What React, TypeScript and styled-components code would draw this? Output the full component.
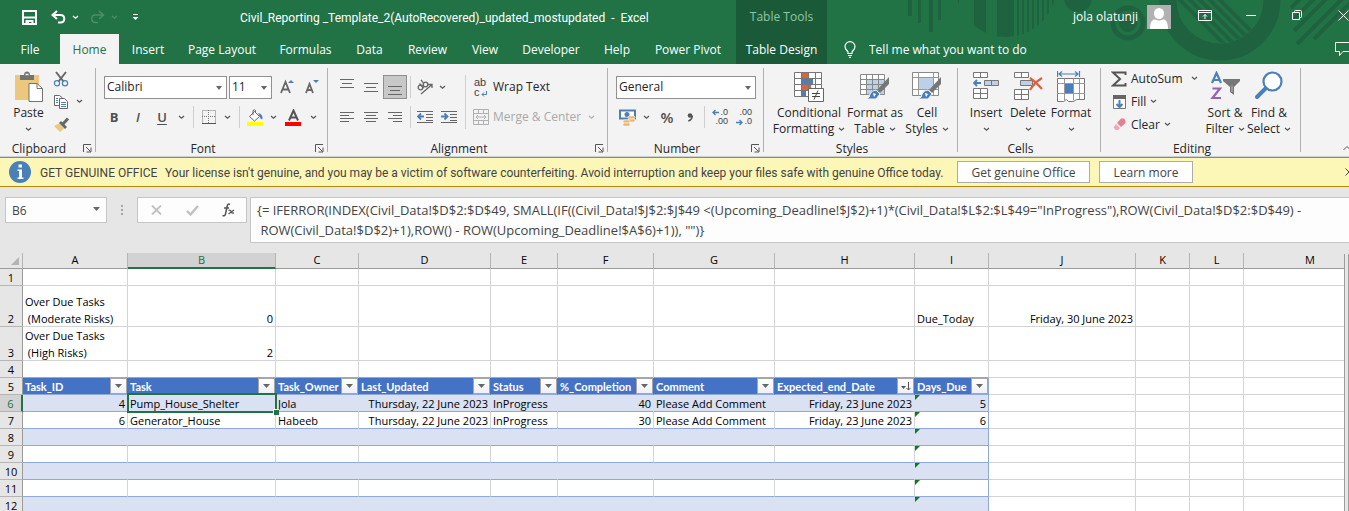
import React from 'react';
import styled, { createGlobalStyle, css } from 'styled-components';

const GREEN = '#217346';
const DARK = '#1b5a38';
const BLUE = '#4a7fb8';
const INK = '#666666';
const UI_FONT = '"Open Sans", "Noto Sans", sans-serif';
const LONG_FONT = 'Roboto, "Open Sans", sans-serif';
const GLYPH_FONT = '"Liberation Sans", Arial, sans-serif';

const GlobalStyle = createGlobalStyle`
  *, *::before, *::after { box-sizing: border-box; }
  html, body { margin: 0; height: 100%; overflow: hidden; }
  button, input, select, textarea { font: inherit; color: inherit; margin: 0; padding: 0; border: 0; background: none; }
  svg { display: block; flex: none; }
`;

const Window = styled.div`
  display: flex;
  flex-direction: column;
  height: 100vh;
  overflow: hidden;
  background: #e6e6e6;
  color: #262626;
  font-family: ${UI_FONT};
  font-size: 12px;
  line-height: 16px;
  white-space: nowrap;
`;

/* ---------- header ---------- */

const Header = styled.header`
  position: relative;
  flex: none;
  display: grid;
  grid-template-columns: 736px 91px minmax(0, 1fr);
  height: 64px;
  overflow: hidden;
  background: ${GREEN};
  color: #fff;
`;

const HeaderArt = styled.svg`
  position: absolute;
  top: 0;
  right: 0;
`;

const HeaderBlock = styled.div<{ $dark?: boolean }>`
  position: relative;
  display: grid;
  grid-template-rows: 34px 30px;
  background: ${(p) => (p.$dark ? DARK : 'transparent')};
`;

const TitleRow = styled.div`
  display: flex;
  align-items: center;
  min-width: 0;
`;

const QuickAccess = styled.div`
  display: flex;
  align-items: center;
  width: 240px;
  padding-left: 17px;
`;

const DocumentTitle = styled.span`
  padding-top: 2px;
  font-family: ${LONG_FONT};
`;

const ContextLabel = styled.div`
  align-self: center;
  text-align: center;
  color: #8fc7a4;
`;

const TabRow = styled.nav`
  display: flex;
`;

const Tab = styled.button<{ $w: number; $active?: boolean }>`
  width: ${(p) => p.$w}px;
  height: 30px;
  padding-top: 1px;
  text-align: center;
  ${(p) => p.$active && css`background: #f3f3f3; color: ${GREEN};`}
`;

const Account = styled.div`
  display: flex;
  align-items: center;
  gap: 9px;
  margin-left: auto;
  margin-right: 11px;
`;

const WindowButtons = styled.div`
  display: flex;
  flex: none;
  height: 30px;
  align-self: flex-start;
  margin-right: -17px;
`;

const TellMe = styled.label`
  display: flex;
  align-items: center;
  gap: 13px;
  padding-left: 17px;
  flex: 1;
`;

const TellInput = styled.input`
  flex: 1;
  padding-top: 1px;
  outline: none;
  &::placeholder { color: #fff; opacity: 1; }
`;

const CommentsButton = styled.button`
  margin-right: -5px;
`;

/* ---------- ribbon ---------- */

const Ribbon = styled.section`
  flex: none;
  display: flex;
  height: 93px;
  background: #f3f3f3;
  border-bottom: 1px solid #cfcfd6;
`;

const GroupBox = styled.div<{ $w: number }>`
  display: grid;
  grid-template-rows: 76px 16px;
  width: ${(p) => p.$w}px;
  flex: none;
  background: linear-gradient(#b1b1b1, #b1b1b1) right 4px / 1px 84px no-repeat;
`;

const GroupBody = styled.div<{ $pad: number; $top?: number }>`
  display: flex;
  padding: ${(p) => p.$top ?? 0}px 0 0 ${(p) => p.$pad}px;
`;

const GroupFooter = styled.div`
  position: relative;
  text-align: center;
  padding: 1px 18px 0 0;
`;

const Launcher = styled.button`
  position: absolute;
  right: 4px;
  top: 4px;
`;

const Stack = styled.div<{ $gap?: number; $w?: number }>`
  display: flex;
  flex-direction: column;
  flex: none;
  gap: ${(p) => p.$gap ?? 0}px;
  width: ${(p) => (p.$w ? `${p.$w}px` : 'auto')};
`;

const ToolRow = styled.div<{ $h?: number }>`
  display: flex;
  align-items: center;
  height: ${(p) => p.$h ?? 24}px;
`;

const Tool = styled.button<{ $w?: number; $h?: number; $on?: boolean }>`
  display: flex;
  align-items: center;
  justify-content: center;
  flex: none;
  width: ${(p) => p.$w ?? 24}px;
  height: ${(p) => p.$h ?? 24}px;
  ${(p) => p.$on && css`background: #c8c8c8; border: 1px solid #8f8f8f;`}
`;

const TextTool = styled.button<{ $muted?: boolean }>`
  display: flex;
  align-items: center;
  gap: 4px;
  height: 100%;
  color: ${(p) => (p.$muted ? '#a9a9a9' : 'inherit')};
`;

const IconSlot = styled.span`
  display: flex;
  justify-content: center;
  width: 16px;
`;

const Rule = styled.span<{ $h?: number; $l?: number; $r?: number }>`
  flex: none;
  width: 1px;
  height: ${(p) => p.$h ?? 22}px;
  margin: 0 ${(p) => p.$r ?? 4}px 0 ${(p) => p.$l ?? 5}px;
  background: #cfcfcf;
`;

const BigTool = styled.button<{ $w: number }>`
  display: flex;
  flex-direction: column;
  align-items: center;
  flex: none;
  width: ${(p) => p.$w}px;
  height: 76px;
  padding-top: 7px;
`;

const BigIcon = styled.span`
  display: flex;
  align-items: flex-start;
  height: 34px;
`;

const BigLine = styled.span`
  display: flex;
  align-items: center;
  justify-content: center;
  gap: 4px;
  height: 16px;
`;

const SelectBox = styled.span<{ $w: number }>`
  position: relative;
  display: block;
  flex: none;
  width: ${(p) => p.$w}px;
  height: 23px;
  background: #fff;
  border: 1px solid #919191;
`;

const Select = styled.select`
  appearance: none;
  width: 100%;
  height: 21px;
  padding-left: 2px;
  outline: none;
`;

const CaretMark = styled.span<{ $r?: number }>`
  position: absolute;
  right: ${(p) => p.$r ?? 4}px;
  top: 9px;
  pointer-events: none;
`;

const Letter = styled.span<{ $b?: boolean; $i?: boolean; $u?: boolean; $size?: number }>`
  color: #4f4f4f;
  font-size: ${(p) => p.$size ?? 13}px;
  font-weight: ${(p) => (p.$b ? 700 : 600)};
  font-style: ${(p) => (p.$i ? 'italic' : 'normal')};
  text-decoration: ${(p) => (p.$u ? 'underline' : 'none')};
  text-underline-offset: 2px;
`;

const RibbonEnd = styled.div`
  display: flex;
  flex: 1;
  justify-content: flex-end;
  align-items: flex-end;
  padding-bottom: 5px;
  overflow: hidden;
`;

const EdgeButton = styled.button`
  margin-right: -2px;
`;

/* ---------- message bar ---------- */

const MessageBar = styled.section`
  flex: none;
  display: flex;
  align-items: center;
  height: 30px;
  padding-left: 9px;
  overflow: hidden;
  background: #fcf7b6;
  border-top: 1px solid #b18b10;
  border-bottom: 1px solid #b18b10;
  color: #444;
`;

const MessageTitle = styled.span`
  width: 125px;
  margin-left: 9px;
  padding-top: 2px;
  font-family: ${LONG_FONT};
`;

const MessageText = styled.span`
  width: 792px;
  padding-top: 2px;
  font-family: ${LONG_FONT};
`;

const MessageButton = styled.button<{ $w: number }>`
  width: ${(p) => p.$w}px;
  height: 22px;
  padding-top: 1px;
  margin-right: 9px;
  background: #fff;
  border: 1px solid #ababab;
`;

const MessageClose = styled.button`
  margin-left: auto;
  margin-right: -4px;
`;

/* ---------- formula bar ---------- */

const FormulaBar = styled.section`
  flex: none;
  display: flex;
  align-items: flex-start;
  height: 66px;
  padding: 10px 0 0 5px;
`;

const NameBox = styled.label`
  position: relative;
  width: 102px;
  height: 26px;
  background: #fdfdfd;
  border: 1px solid #c6c6c6;
`;

const NameInput = styled.input`
  width: 70px;
  height: 24px;
  padding-left: 6px;
  color: #444;
  outline: none;
`;

const Dots = styled.span`
  display: flex;
  justify-content: center;
  width: 30px;
  padding-top: 8px;
`;

const FormulaTools = styled.div`
  display: flex;
  width: 110px;
  height: 26px;
  margin-right: 3px;
  background: #fdfdfd;
  border: 1px solid #c6c6c6;
`;

const FormulaInput = styled.textarea`
  flex: 1;
  height: 46px;
  padding: 2px 6px;
  background: #fdfdfd;
  border: 1px solid #c6c6c6;
  border-right: 0;
  color: #444;
  font-size: 13px;
  line-height: 20px;
  white-space: pre;
  overflow: hidden;
  resize: none;
  outline: none;
`;

/* ---------- sheet ---------- */

const SheetArea = styled.main`
  display: flex;
  flex: 1;
  min-height: 0;
`;

const SheetView = styled.div`
  flex: 1;
  min-width: 0;
  overflow: hidden;
  background: #fff;
`;

const ScrollEdge = styled.div`
  flex: none;
  width: 5px;
  margin-top: 1px;
  background: #e6e6e6;
  border-left: 1px solid #9b9b9b;
  border-right: 1px solid #9b9b9b;
`;

const Sheet = styled.table`
  table-layout: fixed;
  width: 1377px;
  border-collapse: separate;
  border-spacing: 0;
  font-size: 11px;
  line-height: 14px;
  color: #000;
`;

const ColHead = styled.th<{ $sel?: boolean }>`
  height: 16px;
  padding: 0;
  font-weight: 400;
  vertical-align: top;
  border-right: 1px solid #b5b5b5;
  border-bottom: 1px solid #9b9b9b;
  background: ${(p) => (p.$sel ? '#d2d2d2' : '#e6e6e6')};
  ${(p) => p.$sel && css`color: ${GREEN}; border-bottom: 2px solid ${GREEN};`}
`;

const Corner = styled(ColHead)`
  vertical-align: bottom;
  & > svg { margin: 0 0 3px 11px; }
`;

const RowHead = styled.th<{ $h: number; $sel?: boolean }>`
  height: ${(p) => p.$h}px;
  padding: 2px 0 0;
  font-weight: 400;
  vertical-align: bottom;
  border-right: 1px solid #9b9b9b;
  border-bottom: 1px solid #b5b5b5;
  background: ${(p) => (p.$sel ? '#d2d2d2' : '#e6e6e6')};
  ${(p) => p.$sel && css`color: ${GREEN}; border-right: 2px solid ${GREEN};`}
`;

type Kind = 'plain' | 'band' | 'row' | 'head';

const Cell = styled.td<{ $kind: Kind; $right?: boolean; $last?: boolean; $topRule?: boolean }>`
  position: relative;
  padding: 2px 2px 0;
  vertical-align: bottom;
  text-align: ${(p) => (p.$right ? 'right' : 'left')};
  border-right: 1px solid ${(p) => (p.$last ? '#8ea9db' : p.$kind === 'band' ? '#d9e1f2' : p.$kind === 'head' ? '#4472c4' : '#d4d4d4')};
  border-bottom: 1px solid ${(p) => (p.$kind === 'plain' && !p.$topRule ? '#d4d4d4' : '#8ea9db')};
  background: ${(p) => (p.$kind === 'band' ? '#d9e1f2' : p.$kind === 'head' ? '#4472c4' : '#fff')};
  ${(p) => p.$kind === 'head' && css`color: #fff; font-family: Lato, sans-serif; font-weight: 700;`}
`;

const Lines = styled.span`
  display: grid;
  gap: 3px;
  white-space: pre;
`;

const FilterButton = styled.button`
  position: absolute;
  top: 0;
  right: 0;
  display: flex;
  align-items: center;
  justify-content: center;
  width: 17px;
  height: 16px;
  background: linear-gradient(#fff, #eef0f5);
  border: 1px solid #a6a6a6;
`;

const Selection = styled.span`
  position: absolute;
  inset: -2px -2px -2px -1px;
  z-index: 1;
  border: 2px solid ${GREEN};
  &::after {
    content: '';
    position: absolute;
    right: -4px;
    bottom: -4px;
    width: 6px;
    height: 6px;
    background: ${GREEN};
    border-top: 1px solid #fff;
    border-left: 1px solid #fff;
  }
`;

const ErrorMark = styled.span`
  position: absolute;
  top: 0;
  left: 0;
  border-top: 5px solid #0a7d12;
  border-right: 5px solid transparent;
`;

/* ---------- icons ---------- */

const Chev = ({ c = '#555' }: { c?: string }) => (
  <svg width="7" height="5" viewBox="0 0 7 5"><path d="M1 1l2.5 2.3L6 1" fill="none" stroke={c} strokeWidth="1.2" /></svg>
);
const Caret = ({ w = 7 }: { w?: number }) => (
  <svg width={w} height="4" viewBox="0 0 8 4" preserveAspectRatio="none"><path d="M0 0h8L4 4z" fill="#666" /></svg>
);
const LaunchIcon = () => (
  <svg width="9" height="9" viewBox="0 0 9 9"><path d="M.5 8V.5H8M3 3l4.5 4.5M8 3.5V8H3.5" fill="none" stroke="#555" /></svg>
);
const SaveIcon = () => (
  <svg width="15" height="15" viewBox="0 0 15 15"><path d="M1 1h13v13H1z" fill="none" stroke="#fff" strokeWidth="2" /><path d="M2 6.500h11V8.500H2zM3.500 10h8v4h-2v-2H7V14H3.500z" fill="#fff" /></svg>
);
const UndoIcon = ({ flip }: { flip?: boolean }) => (
  <svg width="15" height="14" viewBox="0 0 15 14">
    <g transform={flip ? 'matrix(-1 0 0 1 15 0)' : undefined} fill="none" stroke={flip ? '#4c8f6b' : '#fff'} strokeWidth={flip ? 1.4 : 2}>
      <path d="M6 1L1.500 5 6 9M2 5h7.500c5 0 5 7.500 0 7.500H7" />
    </g>
  </svg>
);
const CustomizeIcon = () => (
  <svg width="7" height="7" viewBox="0 0 7 7"><path d="M1 .5h5" stroke="#fff" /><path d="M.5 3h6l-3 3z" fill="#fff" /></svg>
);
const Avatar = () => (
  <svg width="24" height="24" viewBox="0 0 24 24"><path d="M0 0h24v24H0z" fill="#b1b1b1" /><ellipse cx="12" cy="8.500" rx="5" ry="5.500" fill="#fff" /><path d="M3 24c0-7 2-9.500 5-9.500q4 2 8 0c3 0 5 2.500 5 9.500z" fill="#fff" /></svg>
);
const BulbIcon = () => (
  <svg width="12" height="17" viewBox="0 0 12 17"><path d="M4 12.500V11C3 9 1 8.500 1 5.500a5 4.800 0 0 1 10 0C11 8.500 9 9 8 11v1.500zM4 14.500h4M5 16.300h2" fill="none" stroke="#fff" strokeWidth="1.200" /></svg>
);

const HeaderPattern = () => (
  <HeaderArt width="449" height="64" viewBox="0 0 449 64" aria-hidden="true">
    <defs>
      <clipPath id="disc"><circle cx="106" cy="-13" r="50" /></clipPath>
      <clipPath id="ringInner"><circle cx="320" cy="0" r="43" /></clipPath>
    </defs>
    <g fill="#1f623f">
      <path d="M8 0h4v16H8zM18 0h3v23h-3zM29 0h4v32h-4zM38 0h3v20h-3z" />
      <g clipPath="url(#disc)"><path d="M55 0h4v40h-4zM74 0h12v40H74zM97 0h17v40H97zM117 0h2v40h-2zM122 0h2v40h-2zM127 0h2v40h-2zM132 0h2v40h-2zM137 0h2v40h-2zM142 0h2v40h-2zM147 0h2v40h-2zM152 0h2v40h-2z" /></g>
      <circle cx="178" cy="-2" r="14" />
      <circle cx="228" cy="23" r="9" />
    </g>
    <g fill="none" stroke="#1f623f">
      <circle cx="228" cy="23" r="15" strokeWidth="5" />
      <circle cx="320" cy="0" r="52" strokeWidth="17" />
      <g clipPath="url(#ringInner)" strokeWidth="4"><path d="M270-10l60 60M280-10l60 60M290-10l60 60M300-10l60 60M310-10l60 60" /></g>
      <path d="M391 8l10-10M394 19l24-24M394 31l40-40M397 44l52-52M414 39l42-42" strokeWidth="4" />
    </g>
  </HeaderArt>
);

const PasteIcon = () => (
  <svg width="30" height="32" viewBox="0 0 30 32">
    <path d="M1 4h24v25H1z" fill="#ecc77e" /><path d="M6 4h4q0-3.500 3-3.500T16 4h4v5H6z" fill="#737373" /><path d="M11.500 3.500h3" stroke="#f3f3f3" strokeWidth="1.500" />
    <path d="M15 12.500h8l5.500 5V30.500H15z" fill="#fff" stroke="#737373" /><path d="M23 12.500v5h5.500" fill="none" stroke="#737373" />
  </svg>
);
const CutIcon = () => (
  <svg width="16" height="16" viewBox="0 0 16 16"><path d="M3 1l7.500 9.500M13 1L5.500 10.500" stroke="#666" strokeWidth="2" /><g fill="none" stroke={BLUE} strokeWidth="1.200"><circle cx="4" cy="12.300" r="2.600" /><circle cx="12" cy="12.300" r="2.600" /></g></svg>
);
const CopyIcon = () => (
  <svg width="16" height="16" viewBox="0 0 16 16"><g fill="#fff" stroke="#666"><path d="M1.500 1.500h5l2.500 2v8H1.500z" /><path d="M6.500 4.500h5l3 3v7h-8z" /></g><path d="M3 4.500h2M3 6.500h2M3 8.500h2M8 8.500h5M8 10.500h5M8 12.500h5" stroke={BLUE} /></svg>
);
const PainterIcon = () => (
  <svg width="17" height="16" viewBox="0 0 17 16"><path d="M1 9l5-2.500 5 5L7 15z" fill="#ecc77e" /><path d="M6 6l2-2 6 6-2 2z" fill="#666" /><path d="M10 7l5-5.500" stroke="#666" strokeWidth="3" /></svg>
);
const SizeIcon = ({ down }: { down?: boolean }) => (
  <svg width="16" height="16" viewBox="0 0 16 16"><path d={down ? 'M2 14L5.500 5 9 14M3.300 11h4.500' : 'M1 14L5.500 3 10 14M2.700 10.500h5.700'} fill="none" stroke="#666" strokeWidth="1.800" /><path d={down ? 'M9 1h6l-3 3z' : 'M8 4h6l-3-3z'} fill={BLUE} /></svg>
);
const BordersIcon = () => (
  <svg width="14" height="14" viewBox="0 0 14 14"><path d="M.5.5h13v13H.5zM6.500 0v14M0 6.500h14" fill="none" stroke="#777" strokeDasharray="1 1" /><path d="M0 13.500h14" stroke="#555" /></svg>
);
const FillColorIcon = () => (
  <svg width="17" height="17" viewBox="0 0 17 17"><path d="M2.500 7.500l5-5 5 5-5 4.500z" fill="#fff" stroke="#666" /><path d="M6 6V1.500q1.500-1.500 2.500 0V4" fill="none" stroke="#666" /><path d="M11 4q5 1 4.500 6-2 1-2.500-2z" fill={BLUE} /><path d="M0 13h16v4H0z" fill="#ff0" /></svg>
);
const FontColorIcon = () => (
  <svg width="17" height="17" viewBox="0 0 17 17"><path d="M4 11.500L8.500 1.500 13 11.500M5.500 8.500h6" fill="none" stroke="#555" strokeWidth="2" /><path d="M0 13h16v4H0z" fill="red" /></svg>
);
const LinesIcon = ({ d, c = INK }: { d: string; c?: string }) => (
  <svg width="16" height="16" viewBox="0 0 16 16"><path d={d} stroke={c} fill="none" /></svg>
);
const OrientIcon = () => (
  <svg width="18" height="16" viewBox="0 0 18 16"><g fill="none" stroke="#666" strokeWidth="1.300"><circle cx="4.500" cy="8.500" r="2.300" /><path d="M3.500 4.500l4 4.500" /><circle cx="9.500" cy="5.500" r="2.300" /><path d="M5 .8l3 4M5 15L15.500 6M12 5.500h4V9" /></g></svg>
);
const IndentIcon = ({ right }: { right?: boolean }) => (
  <svg width="16" height="14" viewBox="0 0 16 14"><path d="M0 1.500h16M9 4.500h7M9 7.500h7M9 10.500h7M0 12.500h16" stroke={INK} /><path d={right ? 'M0 6.500h6M3.500 3.500l3 3-3 3' : 'M1 6.500h6M4 3.500l-3 3 3 3'} fill="none" stroke={BLUE} strokeWidth="1.800" /></svg>
);
const WrapGlyph = styled.span`
  position: relative;
  display: block;
  width: 14px;
  font-family: ${GLYPH_FONT};
  font-size: 11px;
  line-height: 10px;
  color: #444;
  text-align: left;
  & > svg { position: absolute; right: 1px; bottom: 0; }
`;
const MergeIcon = () => (
  <svg width="16" height="16" viewBox="0 0 16 16"><path d="M.5.5h15v15H.5zM.5 4.500h15M.5 11.500h15M5.500.5v4M10.500.5v4M5.500 11.500v4M10.500 11.500v4M3 8h10M5 6L3 8l2 2M11 6l2 2-2 2" fill="none" stroke="#b0b0b0" /></svg>
);
const MoneyIcon = () => (
  <svg width="17" height="17" viewBox="0 0 17 17"><path d="M1 1.500h15v8H1z" fill="#fff" stroke={BLUE} strokeWidth="2" /><circle cx="8" cy="5.500" r="2.500" fill={BLUE} /><g fill="#ecb565" stroke="#f3f3f3" strokeWidth=".7"><rect x="9" y="7" width="7" height="3" rx="1.500" /><rect x="9" y="10" width="7" height="3" rx="1.500" /><rect x="4" y="11" width="7" height="3" rx="1.500" /><rect x="4" y="14" width="7" height="3" rx="1.500" /></g></svg>
);
const DecimalGlyph = styled.span<{ $right?: boolean }>`
  position: relative;
  display: block;
  width: 16px;
  font-family: ${GLYPH_FONT};
  font-size: 9px;
  line-height: 9px;
  text-align: right;
  color: #444;
  & > svg { position: absolute; left: 0; ${(p) => (p.$right ? 'bottom: 0;' : 'top: 1px;')} }
`;
const MiniArrow = ({ right }: { right?: boolean }) => (
  <svg width="7" height="7" viewBox="0 0 7 7"><path d={right ? 'M0 3.500h6M3.500 1L6 3.500 3.500 6' : 'M1 3.500h6M3.500 1L1 3.500 3.500 6'} fill="none" stroke={BLUE} strokeWidth="1.300" /></svg>
);
const CondIcon = () => (
  <svg width="30" height="31" viewBox="0 0 30 31">
    <path d="M1 1.500h27v24H1z" fill="#fff" /><path d="M8 2h6v5H8zM8 14h9v5H8z" fill="#dc6141" /><path d="M8 8h11v5H8zM8 20h4v5H8z" fill={BLUE} />
    <path d="M.5 1.500h27v24H.5zM.5 7.500h27M.5 13.500h27M.5 19.500h27M7.500 1.500v24M14.500 1.500v24M21.500 1.500v24" fill="none" stroke="#777" />
    <path d="M14.500 17.500h15v13h-15z" fill="#fff" stroke="#666" /><path d="M18 22.500h8M18 25.500h8M24 19.500l-4 9" stroke="#444" />
  </svg>
);
const Brush = () => (
  <g><path d="M29 6v7l-9 9-3-3z" fill="#777" /><path d="M16 19l4 4-4 5H6q4-1 4-5 2-4 6-4z" fill={BLUE} stroke="#f3f3f3" /><path d="M13 22l3 1-2 3" fill="#fff" /></g>
);
const FormatTableIcon = () => (
  <svg width="30" height="31" viewBox="0 0 30 31"><path d="M.5 3.500h24v20H.5z" fill="#fff" /><path d="M7 9h18v14H7z" fill="#bcd0e8" /><path d="M.5 3.500h24v20H.5zM.5 8.500h24M.5 13.500h24M.5 18.500h24M6.500 3.500v20M12.500 3.500v20M18.500 3.500v20" fill="none" stroke="#888" /><Brush /></svg>
);
const CellStyleIcon = () => (
  <svg width="30" height="31" viewBox="0 0 30 31"><path d="M.5 1.500h26v23H.5z" fill="#fff" stroke="#888" /><path d="M.5 6.500h26M.5 18.500h26M6.500 1.500v23M21.500 1.500v23" stroke="#999" /><path d="M7 7h14v11H7z" fill="#bcd0e8" /><Brush /></svg>
);
const InsertCellIcon = () => (
  <svg width="28" height="30" viewBox="0 0 28 30"><g fill="#fff" stroke="#777"><path d="M1.500 1.500h14v5h-14zM8.500 1.500v5M1.500 17.500h14v10h-14zM8.500 17.500v10M1.500 22.500h14" /><path d="M12.500 9.500h14v5h-14zM19.500 9.500v5" fill="#bcd0e8" /></g><path d="M2 12h7M5 9l-3 3 3 3" fill="none" stroke={BLUE} strokeWidth="1.800" /></svg>
);
const DeleteCellIcon = () => (
  <svg width="31" height="30" viewBox="0 0 31 30"><g fill="#fff" stroke="#777"><path d="M1.500 1.500h14v5h-14zM8.500 1.500v5M1.500 18.500h14v10h-14zM8.500 18.500v10M1.500 23.500h14" /><path d="M7.500 9.500h12v5h-12z" fill="#bcd0e8" /></g><path d="M17 7q6 4 12 11M29 7Q21 12 17 19" fill="none" stroke="#dc6141" strokeWidth="2.200" /></svg>
);
const FormatCellIcon = () => (
  <svg width="28" height="32" viewBox="0 0 28 32"><path d="M.5 0v6M22.500 0v6M2 3h19M5 .5L2 3l3 2.500M18 .5L21 3l-3 2.500" fill="none" stroke={BLUE} strokeWidth="1.200" /><path d="M.5 7.500h27v21h-8l-3 2h-5l-2-2-3 2h-6z" fill="#fff" stroke="#777" /><path d="M0 12.500h28M0 22.500h28M7.500 7.500v22M16.500 7.500v22M22.500 7.500v21" stroke="#999" /><path d="M8 13h8v9H8z" fill={BLUE} /></svg>
);
const SumIcon = () => (
  <svg width="16" height="16" viewBox="0 0 16 16"><path d="M14.500 4V1.500H2L9 8l-7 6.500h12.500V12" fill="none" stroke="#555" strokeWidth="2" /></svg>
);
const FillDownIcon = () => (
  <svg width="15" height="16" viewBox="0 0 15 16"><path d="M1.500 1.500h12v13h-12z" fill="#fff" stroke="#777" /><path d="M1 1h13v4H1z" fill="#666" /><path d="M7.500 6v7M4.500 10l3 3 3-3" fill="none" stroke={BLUE} strokeWidth="2" /></svg>
);
const EraserIcon = () => (
  <svg width="15" height="15" viewBox="0 0 15 15"><path d="M9 1.500h3l1.500 2.500v2L9 10 5 6z" fill="#e77f93" /><path d="M4 7l4 4-2 2H3.500L1.500 10.500z" fill="#f0a6b3" /></svg>
);
const SortIcon = () => (
  <svg width="30" height="30" viewBox="0 0 30 30"><path d="M2 12L6.500 2 11 12M3.500 9h6" fill="none" stroke={BLUE} strokeWidth="2.200" /><path d="M2.500 17.500h7.500l-7.500 9.500H11" fill="none" stroke="#9a60b8" strokeWidth="2.200" /><path d="M13 8h17v2l-6 6v8l-4-3v-5l-7-6z" fill="#777" /><path d="M22 14.500v6.500" stroke="#bbb" /></svg>
);
const FindIcon = () => (
  <svg width="30" height="30" viewBox="0 0 30 30"><circle cx="18.500" cy="10.500" r="9" fill="#fff" stroke={BLUE} strokeWidth="2.200" /><path d="M11.500 17.500L3 26" stroke={BLUE} strokeWidth="4" strokeLinecap="round" /></svg>
);
const InfoIcon = () => (
  <svg width="22" height="22" viewBox="0 0 22 22"><circle cx="11" cy="11" r="11" fill={BLUE} /><path d="M9.500 3.500h3.500v3H9.500zM8.500 8.500H13v8h1.500V18h-6v-1.500H10V10H8.500z" fill="#fff" /></svg>
);

/* ---------- data ---------- */

const TABS: [string, number][] = [
  ['File', 60], ['Home', 59], ['Insert', 58], ['Page Layout', 90], ['Formulas', 77], ['Data', 51],
  ['Review', 65], ['View', 50], ['Developer', 82], ['Help', 50], ['Power Pivot', 92],
];

const COLS: [string, number][] = [
  ['A', 105], ['B', 148], ['C', 83], ['D', 132], ['E', 67], ['F', 96], ['G', 121],
  ['H', 140], ['I', 74], ['J', 147], ['K', 54], ['L', 54], ['M', 133],
];

const FIELDS = ['Task_ID', 'Task', 'Task_Owner', 'Last_Updated', 'Status', '%_Completion', 'Comment', 'Expected_end_Date', 'Days_Due'];
const RIGHT_FIELDS = [0, 3, 5, 7, 8];

const RECORDS: Record<number, string[]> = {
  6: ['4', 'Pump_House_Shelter', 'Jola', 'Thursday, 22 June 2023', 'InProgress', '40', 'Please Add Comment', 'Friday, 23 June 2023', '5'],
  7: ['6', 'Generator_House', 'Habeeb', 'Thursday, 22 June 2023', 'InProgress', '30', 'Please Add Comment', 'Friday, 23 June 2023', '6'],
};

const NOTES: Record<string, { lines: string[]; right?: boolean }> = {
  '2-0': { lines: ['Over Due Tasks', ' (Moderate Risks)'] },
  '2-1': { lines: ['0'], right: true },
  '2-8': { lines: ['Due_Today'] },
  '2-9': { lines: ['Friday, 30 June 2023'], right: true },
  '3-0': { lines: ['Over Due Tasks', ' (High Risks)'] },
  '3-1': { lines: ['2'], right: true },
};

const ROWS = Array.from({ length: 12 }, (_, i) => i + 1);
const rowHeight = (n: number) => (n === 2 ? 41 : n === 3 ? 34 : 17);

const FORMULA =
  '{= IFERROR(INDEX(Civil_Data!$D$2:$D$49, SMALL(IF((Civil_Data!$J$2:$J$49 <(Upcoming_Deadline!$J$2)+1)*(Civil_Data!$L$2:$L$49="InProgress"),ROW(Civil_Data!$D$2:$D$49) -\n' +
  ' ROW(Civil_Data!$D$2)+1),ROW() - ROW(Upcoming_Deadline!$A$6)+1)), "")}';

/* ---------- composed parts ---------- */

const Group = ({ label, w, pad, top, launcher, children }: {
  label: string; w: number; pad: number; top?: number; launcher?: boolean; children: React.ReactNode;
}) => (
  <GroupBox $w={w}>
    <GroupBody $pad={pad} $top={top}>{children}</GroupBody>
    <GroupFooter>
      {label}
      {launcher && <Launcher aria-label={`${label} settings`}><LaunchIcon /></Launcher>}
    </GroupFooter>
  </GroupBox>
);

const Drop = ({ w = 14, c, label }: { w?: number; c?: string; label: string }) => (
  <Tool $w={w} aria-label={label}><Chev c={c} /></Tool>
);

const Combo = ({ label, value, w }: { label: string; value: string; w: number }) => (
  <SelectBox $w={w}>
    <Select aria-label={label} defaultValue={value}><option>{value}</option></Select>
    <CaretMark><Caret w={6} /></CaretMark>
  </SelectBox>
);

const Big = ({ w, icon, l1, l2 }: { w: number; icon: React.ReactNode; l1: string; l2?: string }) => (
  <BigTool $w={w}>
    <BigIcon>{icon}</BigIcon>
    <BigLine>{l1}</BigLine>
    <BigLine>{l2}<Chev /></BigLine>
  </BigTool>
);

const SheetCell = ({ row, col }: { row: number; col: number }) => {
  const inTable = col < 9;
  if (inTable && row === 5) {
    return (
      <Cell $kind="head" $last={col === 8}>
        {FIELDS[col]}
        <FilterButton aria-label={`Filter ${FIELDS[col]}`}>
          {col === 7
            ? <svg width="10" height="9" viewBox="0 0 10 9"><path d="M0 4h5L2.500 7z" fill="#555" /><path d="M7.500 0v8M5.500 6l2 2 2-2" fill="none" stroke="#555" /></svg>
            : <Caret w={7} />}
        </FilterButton>
      </Cell>
    );
  }
  if (inTable && row > 5) {
    return (
      <Cell $kind={row % 2 === 0 ? 'band' : 'row'} $right={RIGHT_FIELDS.includes(col)} $last={col === 8}>
        {RECORDS[row]?.[col]}
        {col === 8 && <ErrorMark />}
        {row === 6 && col === 1 && <Selection />}
      </Cell>
    );
  }
  const note = NOTES[`${row}-${col}`];
  return (
    <Cell $kind="plain" $right={note?.right} $topRule={inTable && row === 4}>
      {note && <Lines>{note.lines.map((t) => <span key={t}>{t}</span>)}</Lines>}
    </Cell>
  );
};

export default function App() {
  return (
    <Window>
      <GlobalStyle />
      <Header>
        <HeaderPattern />
        <HeaderBlock>
          <TitleRow>
            <QuickAccess>
              <Tool aria-label="Save"><SaveIcon /></Tool>
              <Rule $h={0} $l={2} $r={2} />
              <Tool aria-label="Undo"><UndoIcon /></Tool>
              <Drop w={10} c="#fff" label="Undo history" />
              <Rule $h={0} $l={2} $r={2} />
              <Tool aria-label="Redo"><UndoIcon flip /></Tool>
              <Drop w={10} c="#4c8f6b" label="Redo history" />
              <Tool $w={32} aria-label="Customize toolbar"><CustomizeIcon /></Tool>
            </QuickAccess>
            <DocumentTitle>Civil_Reporting _Template_2(AutoRecovered)_updated_mostupdated&nbsp; -&nbsp; Excel</DocumentTitle>
          </TitleRow>
          <TabRow>
            {TABS.map(([t, w]) => <Tab key={t} $w={w} $active={t === 'Home'}>{t}</Tab>)}
          </TabRow>
        </HeaderBlock>
        <HeaderBlock $dark>
          <ContextLabel>Table Tools</ContextLabel>
          <Tab $w={91}>Table Design</Tab>
        </HeaderBlock>
        <HeaderBlock>
          <TitleRow>
            <Account>jola olatunji<Avatar /></Account>
            <WindowButtons>
              <Tool $w={46} $h={30} aria-label="Ribbon display options">
                <svg width="14" height="11" viewBox="0 0 14 11"><path d="M.5.5h13v10H.5zM.5 2.500h13M7 9V4.500M5 6.500l2-2 2 2" fill="none" stroke="#fff" /></svg>
              </Tool>
              <Tool $w={46} $h={30} aria-label="Minimize"><svg width="10" height="1"><path d="M0 0h10v1H0z" fill="#fff" /></svg></Tool>
              <Tool $w={46} $h={30} aria-label="Restore">
                <svg width="10" height="10" viewBox="0 0 10 10"><path d="M.5 2.500h7v7h-7zM2.500 2.500V1.500q0-1 1-1h5q1 0 1 1v5q0 1-1 1h-1" fill="none" stroke="#fff" /></svg>
              </Tool>
              <Tool $w={46} $h={30} aria-label="Close"><svg width="11" height="11" viewBox="0 0 11 11"><path d="M.5.5l10 10M10.500.5l-10 10" stroke="#fff" /></svg></Tool>
            </WindowButtons>
          </TitleRow>
          <TitleRow>
            <TellMe><BulbIcon /><TellInput aria-label="Tell me" placeholder="Tell me what you want to do" /></TellMe>
            <CommentsButton aria-label="Comments">
              <svg width="19" height="16" viewBox="0 0 19 16"><path d="M.5 1.500h18v9H8l-3.500 4v-4h-4z" fill="none" stroke="#fff" /></svg>
            </CommentsButton>
          </TitleRow>
        </HeaderBlock>
      </Header>

      <Ribbon>
        <Group label="Clipboard" w={96} pad={8} launcher>
          <Big w={41} icon={<PasteIcon />} l1="Paste" />
          <Stack>
            <ToolRow $h={3} />
            <ToolRow $h={23}><Tool $h={23} aria-label="Cut"><CutIcon /></Tool></ToolRow>
            <ToolRow $h={23}><Tool $h={23} aria-label="Copy"><CopyIcon /></Tool><Drop w={12} label="Copy options" /></ToolRow>
            <ToolRow $h={23}><Tool $h={23} aria-label="Format painter"><PainterIcon /></Tool></ToolRow>
          </Stack>
        </Group>

        <Group label="Font" w={232} pad={6} top={11} launcher>
          <Stack $gap={6}>
            <ToolRow>
              <Rule $h={0} $l={0} $r={1} />
              <Combo label="Font" value="Calibri" w={123} />
              <Rule $h={0} $l={0} $r={1} />
              <Combo label="Font size" value="11" w={43} />
              <Rule $h={0} $l={2} $r={1} />
              <Tool aria-label="Increase font size"><SizeIcon /></Tool>
              <Tool aria-label="Decrease font size"><SizeIcon down /></Tool>
            </ToolRow>
            <ToolRow>
              <Tool><Letter $b>B</Letter></Tool>
              <Tool><Letter $i>I</Letter></Tool>
              <Tool><Letter $u>U</Letter></Tool>
              <Drop label="Underline options" />
              <Rule />
              <Tool $w={22} aria-label="Borders"><BordersIcon /></Tool>
              <Drop label="Border options" />
              <Rule />
              <Tool $w={22} aria-label="Fill color"><FillColorIcon /></Tool>
              <Drop label="Fill color options" />
              <Tool $w={26} aria-label="Font color"><FontColorIcon /></Tool>
              <Drop label="Font color options" />
            </ToolRow>
          </Stack>
        </Group>

        <Group label="Alignment" w={280} pad={7} top={11} launcher>
          <Stack $gap={6}>
            <ToolRow>
              <Tool aria-label="Top align"><LinesIcon d="M1 .5h14M3 4.500h10M1 8.500h14" /></Tool>
              <Tool aria-label="Middle align"><LinesIcon d="M1 4.500h14M3 8.500h10M1 12.500h14" /></Tool>
              <Tool $on aria-label="Bottom align"><LinesIcon d="M1 7.500h14M3 11.500h10M1 15.500h14" /></Tool>
              <Rule $l={3} $r={2} />
              <Tool aria-label="Orientation"><OrientIcon /></Tool>
              <Drop w={10} label="Orientation options" />
            </ToolRow>
            <ToolRow>
              <Tool aria-label="Align left"><LinesIcon d="M1 3.500h14M1 6.500h9M1 9.500h14M1 12.500h9" /></Tool>
              <Tool aria-label="Center"><LinesIcon d="M1 3.500h14M3 6.500h10M1 9.500h14M3 12.500h10" /></Tool>
              <Tool aria-label="Align right"><LinesIcon d="M1 3.500h14M6 6.500h9M1 9.500h14M6 12.500h9" /></Tool>
              <Rule $l={3} $r={2} />
              <Tool aria-label="Decrease indent"><IndentIcon /></Tool>
              <Tool aria-label="Increase indent"><IndentIcon right /></Tool>
            </ToolRow>
          </Stack>
          <Rule $h={54} $l={4} $r={7} />
          <Stack $gap={6}>
            <ToolRow>
              <TextTool>
                <IconSlot>
                  <WrapGlyph>ab<br />c<svg width="6" height="6" viewBox="0 0 6 6"><path d="M5.500 0v3.500H1M3 1.500l-2 2 2 2" fill="none" stroke={BLUE} /></svg></WrapGlyph>
                </IconSlot>
                Wrap Text
              </TextTool>
            </ToolRow>
            <ToolRow>
              <TextTool $muted><IconSlot><MergeIcon /></IconSlot>Merge &amp; Center</TextTool>
              <Drop w={20} c="#b0b0b0" label="Merge options" />
            </ToolRow>
          </Stack>
        </Group>

        <Group label="Number" w={156} pad={7} top={11} launcher>
          <Stack $gap={6}>
            <ToolRow>
              <Rule $h={0} $l={0} $r={0} />
              <Combo label="Number format" value="General" w={140} />
            </ToolRow>
            <ToolRow>
              <Tool aria-label="Accounting format"><MoneyIcon /></Tool>
              <Drop label="Accounting options" />
              <Tool $w={28}><Letter $size={15}>%</Letter></Tool>
              <Tool $w={18} aria-label="Comma style"><svg width="6" height="9" viewBox="0 0 6 9"><circle cx="3" cy="2.500" r="2.300" fill="#555" /><path d="M5.300 2.500q0 4-4 5.500" fill="none" stroke="#555" strokeWidth="1.500" /></svg></Tool>
              <Rule $r={3} />
              <Tool aria-label="Increase decimal"><DecimalGlyph><MiniArrow />.0<br />.00</DecimalGlyph></Tool>
              <Tool aria-label="Decrease decimal"><DecimalGlyph $right><MiniArrow right />.00<br />.0</DecimalGlyph></Tool>
            </ToolRow>
          </Stack>
        </Group>

        <Group label="Styles" w={194} pad={11}>
          <Big w={68} icon={<CondIcon />} l1="Conditional" l2="Formatting" />
          <Big w={64} icon={<FormatTableIcon />} l1="Format as" l2="Table" />
          <Big w={40} icon={<CellStyleIcon />} l1="Cell" l2="Styles" />
        </Group>

        <Group label="Cells" w={143} pad={7}>
          <Big w={42} icon={<InsertCellIcon />} l1="Insert" />
          <Big w={42} icon={<DeleteCellIcon />} l1="Delete" />
          <Big w={44} icon={<FormatCellIcon />} l1="Format" />
        </Group>

        <Group label="Editing" w={200} pad={10}>
          <Stack $w={92}>
            <ToolRow $h={3} />
            <ToolRow $h={23}><TextTool><IconSlot><SumIcon /></IconSlot>AutoSum</TextTool><Drop w={24} label="AutoSum options" /></ToolRow>
            <ToolRow $h={23}><TextTool><IconSlot><FillDownIcon /></IconSlot>Fill<Chev /></TextTool></ToolRow>
            <ToolRow $h={23}><TextTool><IconSlot><EraserIcon /></IconSlot>Clear<Chev /></TextTool></ToolRow>
          </Stack>
          <Big w={44} icon={<SortIcon />} l1="Sort &amp;" l2="Filter" />
          <Big w={44} icon={<FindIcon />} l1="Find &amp;" l2="Select" />
        </Group>

        <RibbonEnd>
          <EdgeButton aria-label="Collapse ribbon"><svg width="8" height="6" viewBox="0 0 8 6"><path d="M.5 5L4 1.500 7.500 5" fill="none" stroke="#555" /></svg></EdgeButton>
        </RibbonEnd>
      </Ribbon>

      <MessageBar>
        <InfoIcon />
        <MessageTitle>GET GENUINE OFFICE</MessageTitle>
        <MessageText>Your license isn't genuine, and you may be a victim of software counterfeiting. Avoid interruption and keep your files safe with genuine Office today.</MessageText>
        <MessageButton $w={133}>Get genuine Office</MessageButton>
        <MessageButton $w={94}>Learn more</MessageButton>
        <MessageClose aria-label="Dismiss"><svg width="8" height="8" viewBox="0 0 8 8"><path d="M.5.5l7 7M7.500.5l-7 7" stroke="#444" /></svg></MessageClose>
      </MessageBar>

      <FormulaBar>
        <NameBox>
          <NameInput aria-label="Name box" defaultValue="B6" />
          <CaretMark $r={6}><Caret /></CaretMark>
        </NameBox>
        <Dots><svg width="2" height="11" viewBox="0 0 2 11"><path d="M0 0h2v2H0zM0 4h2v2H0zM0 8h2v2H0z" fill="#a6a6a6" /></svg></Dots>
        <FormulaTools>
          <Tool $w={36} aria-label="Cancel"><svg width="11" height="10" viewBox="0 0 11 10"><path d="M1 .5l9 9M10 .5l-9 9" stroke="#c0c0c0" strokeWidth="1.800" /></svg></Tool>
          <Tool $w={36} aria-label="Enter"><svg width="13" height="11" viewBox="0 0 13 11"><path d="M1 6l3.500 3.500L12 1" fill="none" stroke="#c0c0c0" strokeWidth="2.400" /></svg></Tool>
          <Tool $w={36} aria-label="Insert function">
            <svg width="13" height="14" viewBox="0 0 13 14"><path d="M8 1.500Q5.500 0 5 4L3.500 11Q3 13.500.5 12.500M2 5h5" fill="none" stroke="#555" strokeWidth="1.500" /><path d="M6.500 7.500q2-1 2.500 1t3 1.500M12 7l-5.500 4" fill="none" stroke="#555" strokeWidth="1.300" /></svg>
          </Tool>
        </FormulaTools>
        <FormulaInput aria-label="Formula" rows={2} spellCheck={false} wrap="off" defaultValue={FORMULA} />
      </FormulaBar>

      <SheetArea>
        <SheetView>
          <Sheet>
            <colgroup>
              <col width={23} />
              {COLS.map(([c, w]) => <col key={c} width={w} />)}
            </colgroup>
            <thead>
              <tr>
                <Corner aria-label="Select all"><svg width="8" height="8" viewBox="0 0 8 8"><path d="M8 0v8H0z" fill="#b4b4b4" /></svg></Corner>
                {COLS.map(([c]) => <ColHead key={c} scope="col" $sel={c === 'B'}>{c}</ColHead>)}
              </tr>
            </thead>
            <tbody>
              {ROWS.map((r) => (
                <tr key={r}>
                  <RowHead scope="row" $h={rowHeight(r)} $sel={r === 6}>{r}</RowHead>
                  {COLS.map(([c], i) => <SheetCell key={c} row={r} col={i} />)}
                </tr>
              ))}
            </tbody>
          </Sheet>
        </SheetView>
        <ScrollEdge />
      </SheetArea>
    </Window>
  );
}
